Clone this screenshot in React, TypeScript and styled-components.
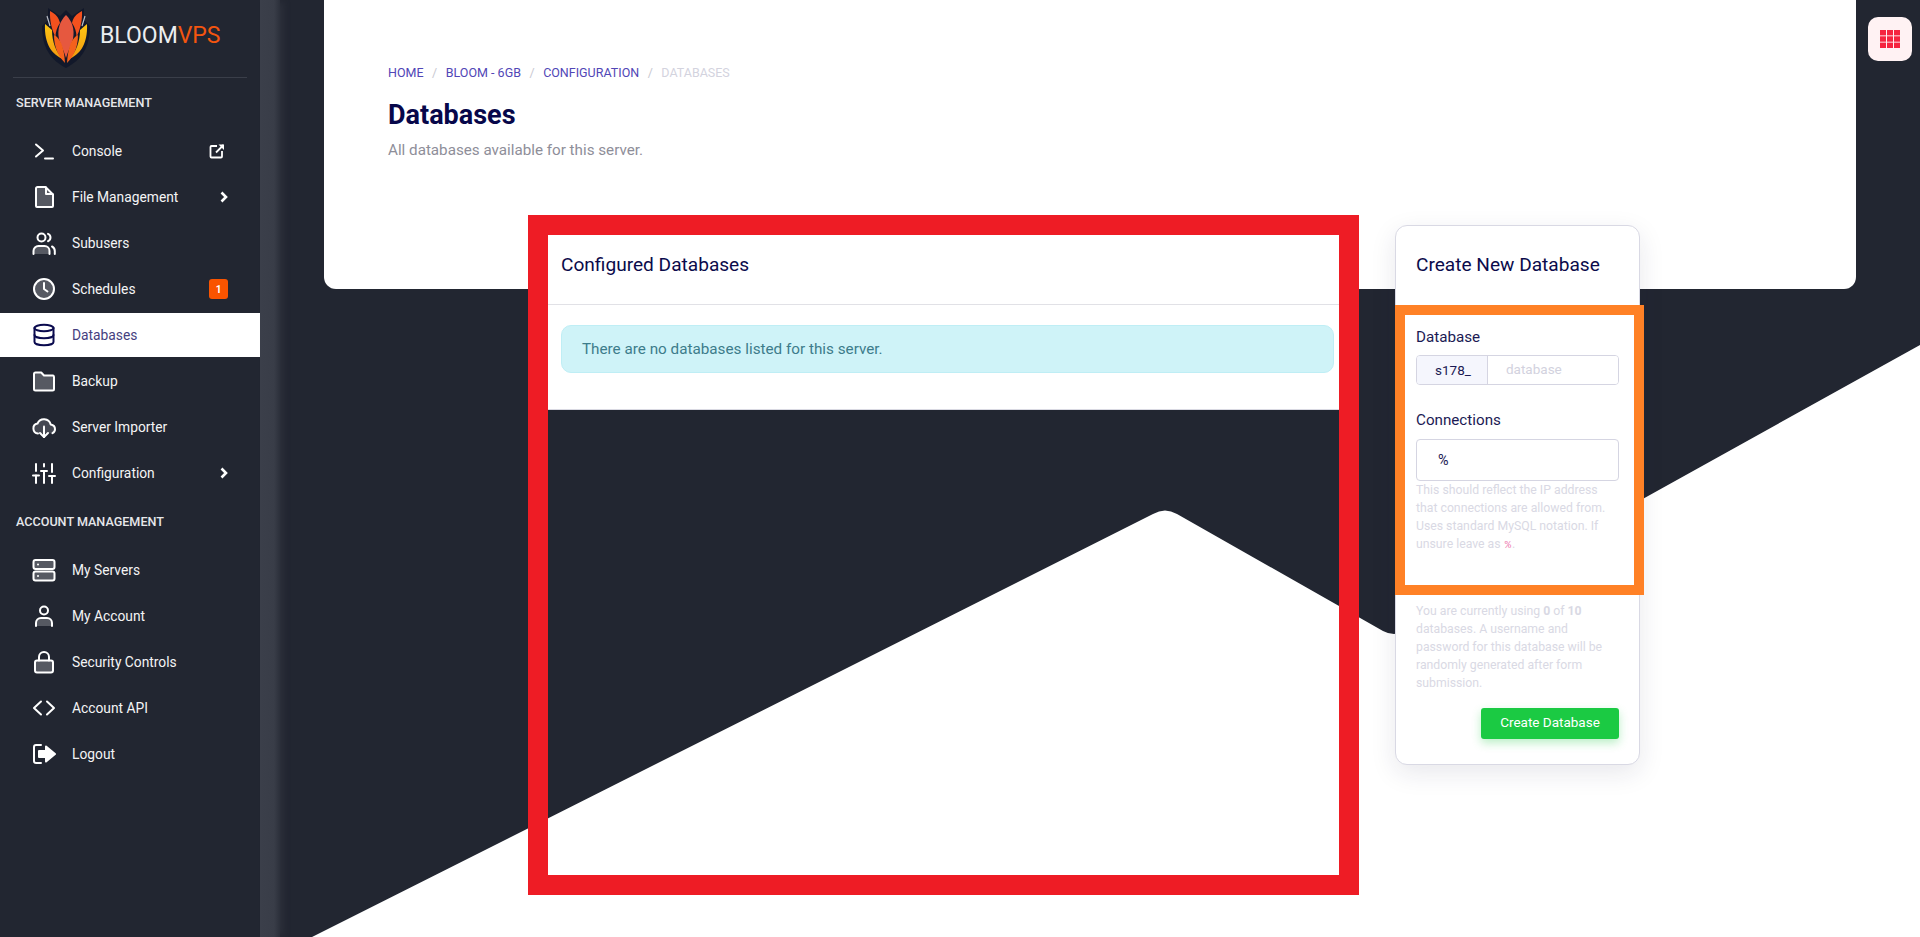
import React from "react";
import styled, { createGlobalStyle } from "styled-components";

const Global = createGlobalStyle`
  html, body { margin: 0; padding: 0; height: 937px; overflow: hidden; background: #222631; }
  * { box-sizing: border-box; }
  body { font-family: Roboto, "Liberation Sans", sans-serif; }
`;

const Page = styled.div`
  display: flex;
  width: 1920px;
  height: 937px;
  overflow: hidden;
  background: #222631;
`;

const Sidebar = styled.aside`
  width: 260px;
  flex: none;
  display: flex;
  flex-direction: column;
  background: #222631;
`;

const Brand = styled.div`
  height: 78px;
  margin: 0 13px;
  padding: 8px 0 0 29px;
  display: flex;
  align-items: flex-start;
  border-bottom: 1px solid #3a3e49;
`;

const BrandText = styled.div`
  margin: 12px 0 0 10px;
  font-family: Roboto, sans-serif;
  font-size: 23px;
  line-height: 32px;
  font-weight: 400;
  color: #eceef0;
  span { color: #f4550f; }
`;

const SectionTitle = styled.div<{ $first?: boolean }>`
  height: 16px;
  margin: ${(p) => (p.$first ? "17px" : "19px")} 0 18px 16px;
  font-size: 12.6px;
  line-height: 16px;
  font-weight: 500;
  color: #e6e7ea;
`;

const NavList = styled.nav`
  display: flex;
  flex-direction: column;
  gap: 2px;
`;

const NavRow = styled.div<{ $active?: boolean }>`
  height: 44px;
  padding: 0 32px;
  display: flex;
  align-items: center;
  gap: 16px;
  background: ${(p) => (p.$active ? "#fff" : "transparent")};
  color: ${(p) => (p.$active ? "#0a0a4e" : "#fff")};
`;

const NavLabel = styled.span<{ $active?: boolean }>`
  flex: 1;
  font-size: 13.8px;
  font-weight: 400;
  color: ${(p) => (p.$active ? "#453f80" : "#f4f4f5")};
`;

const Badge = styled.span`
  width: 19px;
  height: 20px;
  border-radius: 3px;
  background: #f95400;
  color: #fff;
  font-size: 10px;
  font-weight: 700;
  display: flex;
  align-items: center;
  justify-content: center;
`;

const IconSvg = styled.svg`
  width: 24px;
  height: 24px;
  flex: none;
  fill: none;
  stroke: currentColor;
  stroke-width: 2;
  stroke-linecap: round;
  stroke-linejoin: round;
`;

const ToneFill = styled.path`
  fill: currentColor;
  fill-opacity: 0.24;
  stroke: none;
`;

const ExternalIcon = styled.svg`
  width: 16px;
  height: 16px;
  margin-right: 3px;
  fill: none;
  stroke: #fff;
  stroke-width: 1.8;
`;

const ChevronIcon = styled.svg`
  width: 8px;
  height: 12px;
  fill: none;
  stroke: #fff;
  stroke-width: 2.6;
`;

const Strip = styled.div`
  width: 20px;
  flex: none;
  background: linear-gradient(to right, #3b3f4a 0%, #393d48 70%, #2c303b 100%);
  box-shadow: 5px 0 7px -2px rgba(59, 63, 74, 0.45);
`;

const Main = styled.main`
  position: relative;
  flex: 1;
  min-width: 0;
  height: 937px;
`;

const Backdrop = styled.svg`
  position: absolute;
  left: 0;
  top: 0;
  width: 1640px;
  height: 937px;
`;

const Hero = styled.header`
  position: relative;
  height: 289px;
  margin: 0 64px 0 44px;
  padding: 65px 64px 0;
  background: #fff;
  border-radius: 0 0 12px 12px;
`;

const Crumbs = styled.ol`
  display: flex;
  margin: 0;
  padding: 0;
  list-style: none;
  font-size: 12.5px;
  line-height: 16px;
  text-transform: uppercase;
`;

const Crumb = styled.li<{ $current?: boolean }>`
  color: ${(p) => (p.$current ? "#d3d3de" : "#5146b6")};
  &:not(:first-child)::before {
    content: "/";
    color: #c9c9d2;
    padding: 0 8.5px;
  }
`;

const Title = styled.h1`
  margin: 16px 0 0;
  font-size: 27px;
  line-height: 36px;
  font-weight: 700;
  color: #07074a;
`;

const Subtitle = styled.p`
  margin: 7px 0 0;
  font-size: 15.2px;
  line-height: 20px;
  color: #8e8e99;
`;

const GridButton = styled.button`
  position: absolute;
  left: 1588px;
  top: 17px;
  width: 44px;
  height: 44px;
  padding: 0;
  border: 0;
  border-radius: 10px;
  background: #fff2f3;
  display: flex;
  align-items: center;
  justify-content: center;
`;

const Content = styled.div`
  position: relative;
  display: flex;
  align-items: flex-start;
  gap: 36px;
  margin: -74px 0 0 248px;
`;

const RedFrame = styled.section`
  width: 831px;
  height: 680px;
  border: 20px solid #ee1c25;
  flex: none;
`;

const ListCard = styled.div`
  height: 175px;
  background: #fff;
  border-bottom: 1px solid #d9d9e2;
`;

const CardHeading = styled.h2`
  margin: 0;
  font-size: 19.1px;
  line-height: 24px;
  font-weight: 400;
  color: #0b0b4b;
`;

const ListHeader = styled.div`
  height: 70px;
  padding: 18px 13px 0;
  border-bottom: 1px solid #e1e1e6;
`;

const Alert = styled.div`
  height: 48px;
  margin: 20px 5px 0 13px;
  padding: 0 20px;
  display: flex;
  align-items: center;
  background: #cff3f8;
  border: 1px solid #bfeef5;
  border-radius: 10px;
  color: #3d7c8b;
  font-size: 15.25px;
`;

const CreateCard = styled.section`
  width: 245px;
  flex: none;
  margin-top: 10px;
  height: 540px;
  background: #fff;
  border: 1px solid #d9d9e4;
  border-radius: 12px;
  box-shadow: 0 8px 26px rgba(30, 30, 70, 0.1);
`;

const CreateHeader = styled.div`
  height: 79px;
  padding: 27px 20px 0;
`;

const OrangeFrame = styled.div`
  width: 249px;
  height: 290px;
  margin-left: -1px;
  border: 10px solid #ff8126;
  padding: 12px 15px 0 11px;
  background: #fff;
  position: relative;
`;

const FieldLabel = styled.label<{ $spaced?: boolean }>`
  display: block;
  margin-top: ${(p) => (p.$spaced ? "25px" : "0")};
  font-size: 15.2px;
  line-height: 20px;
  color: #1b1a54;
`;

const InputGroup = styled.div`
  display: flex;
  height: 30px;
  margin-top: 8px;
  border: 1px solid #d5d5e2;
  border-radius: 4px;
  overflow: hidden;
`;

const Addon = styled.span`
  width: 71px;
  padding-left: 18px;
  display: flex;
  align-items: center;
  background: #f5f6fd;
  border-right: 1px solid #d5d5e2;
  font-size: 13.5px;
  color: #1b1a54;
`;

const PlainInput = styled.input`
  flex: 1;
  min-width: 0;
  border: 0;
  outline: 0;
  padding: 0 0 2px 18px;
  font: 400 13.5px Roboto, sans-serif;
  &::placeholder { color: #d2d2de; opacity: 1; }
`;

const BoxInput = styled.input`
  display: block;
  width: 100%;
  height: 42px;
  margin-top: 9px;
  padding: 0 21px;
  border: 1px solid #d5d5e2;
  border-radius: 4px;
  outline: 0;
  font: 400 14.4px Roboto, sans-serif;
  color: #1b1a54;
`;

const Help = styled.p`
  margin: 0;
  font-size: 12.25px;
  line-height: 18px;
  color: #d9d9e4;
  code {
    font-family: "Liberation Mono", monospace;
    font-size: 10.5px;
    line-height: 1;
    margin: 0 1px;
    color: #ee7fb4;
  }
  strong { font-weight: 700; }
`;

const CreateBody = styled.div`
  padding: 7px 20px 0;
`;

const ButtonRow = styled.div`
  display: flex;
  justify-content: flex-end;
  margin-top: 16px;
`;

const SubmitButton = styled.button`
  width: 138px;
  height: 31px;
  padding: 0 0 3px;
  border: 0;
  border-radius: 3px;
  background: #1bca43;
  color: #fff;
  font: 400 13.5px Roboto, sans-serif;
  box-shadow: 0 4px 10px rgba(27, 202, 67, 0.3);
`;

const I = ({ children }: { children: React.ReactNode }) => <IconSvg viewBox="0 0 24 24">{children}</IconSvg>;

const icons: Record<string, React.ReactNode> = {
  console: (<><path d="M4 5.500 11 11.500 4 17.500" /><path d="M13 19.500h8" /></>),
  file: (<><ToneFill d="M4 2h10l7 7v13H4z" /><path d="M5.500 2h8L21 9.500V21a1 1 0 0 1-1 1H5a1 1 0 0 1-1-1V3.500A1.500 1.500 0 0 1 5.500 2z" /><path d="M14 2.500V9h6.500" /></>),
  users: (<><circle cx="9.500" cy="6.500" r="4" /><path d="M16 2.800a4 4 0 0 1 0 7.400" /><path d="M1.500 23v-3a5 5 0 0 1 5-5h6a5 5 0 0 1 5 5v3" /><ToneFill d="M2 23v-3a5 5 0 0 1 5-5h5a5 5 0 0 1 5 5v3z" /><path d="M20 15.500c1.700.8 2.800 2.500 2.800 4.500v3" /></>),
  clock: (<><circle cx="12" cy="12" r="10" fill="currentColor" fillOpacity=".24" /><path d="M12 6v6l3.500 2.500" /></>),
  db: (<><ellipse cx="12" cy="5" rx="9.500" ry="3.200" /><path d="M2.500 5v14c0 1.800 4.300 3.200 9.500 3.200s9.500-1.400 9.500-3.200V5" /><path d="M2.500 12c0 1.800 4.300 3.200 9.500 3.200s9.500-1.400 9.500-3.200" /></>),
  folder: (<><path d="M2 5a1.500 1.500 0 0 1 1.500-1.500h5.700l2.800 3h9A1.500 1.500 0 0 1 22 8v12a1.500 1.500 0 0 1-1.500 1.500h-17A1.500 1.500 0 0 1 2 20z" fill="currentColor" fillOpacity=".24" /></>),
  cloud: (<><path d="M6 18.500A5 5 0 0 1 5.500 8.600 7 7 0 0 1 18.700 9.500c2.500.4 4.300 2.300 4.300 4.700 0 1.800-1 3.200-2.500 4" fill="currentColor" fillOpacity=".16" /><path d="M12 11.500v10.500" /><path d="M8 18l4 4 4-4" /></>),
  sliders: (<><path d="M4 3v7M4 14.500V22M12 3v2.500M12 10v12M20 3v8M20 15v7" /><path d="M1 14.500h6M9 10h6M17 15h6" /></>),
  servers: (<><rect x="1.500" y="2" width="21" height="9" rx="2" fill="currentColor" fillOpacity=".24" /><rect x="1.500" y="13.500" width="21" height="9" rx="2" fill="currentColor" fillOpacity=".24" /><path d="M6 6.500h.01M6 18h.01" /></>),
  user: (<><circle cx="12" cy="6.500" r="4" /><ToneFill d="M4 22v-3a5 5 0 0 1 5-5h6a5 5 0 0 1 5 5v3z" /><path d="M4 22v-3a5 5 0 0 1 5-5h6a5 5 0 0 1 5 5v3" /></>),
  lock: (<><rect x="3" y="10.500" width="18" height="12" rx="2" fill="currentColor" fillOpacity=".24" /><path d="M7 10.500V7a5 5 0 0 1 10 0v3.500" /></>),
  code: (<><path d="M9 5.500 2 12l7 6.500" /><path d="M15 5.500l7 6.500-7 6.500" /></>),
  logout: (<><path d="M9 3H4a2 2 0 0 0-2 2v14a2 2 0 0 0 2 2h5" /><path d="M7 9h7V4.500L23 12l-9 7.500V15H7z" fill="currentColor" stroke="currentColor" /></>),
};

const External = () => (
  <ExternalIcon viewBox="0 0 16 16">
    <path d="M8 3H2.500a1 1 0 0 0-1 1v9.500a1 1 0 0 0 1 1H12a1 1 0 0 0 1-1V8" />
    <path d="M7 9.500 14.500 2" />
    <path d="M9.500 1.500h5.500v5.500" fill="#fff" stroke="none" />
  </ExternalIcon>
);

const Chevron = () => (
  <ChevronIcon viewBox="0 0 8 12">
    <path d="M1.500 1.500 6 6l-4.500 4.500" />
  </ChevronIcon>
);

const Logo = () => (
  <svg width="48" height="60" viewBox="0 0 48 60" aria-hidden="true">
    <defs>
      <linearGradient id="petal" x1="0" y1="0" x2="0" y2="1">
        <stop offset="0" stopColor="#fcc514" />
        <stop offset="1" stopColor="#f29a0e" />
      </linearGradient>
    </defs>
    <path d="M24 60C9 52 0 40 0 18L6 12 6 0 18 8 24 2 30 8 42 0 42 12 48 18C48 40 39 52 24 60Z" fill="#12182a" />
    <path d="M3 16 10 22C10 34 14 44 21 51 11 47 2 37 3 16Z" fill="url(#petal)" />
    <path d="M45 16 38 22C38 34 34 44 27 51 37 47 46 37 45 16Z" fill="url(#petal)" />
    <path d="M8 3C14 6 17 10 18 15 15 19 13.500 24 13.500 29 10 22 7.500 13 8 3Z" fill="#f4511e" />
    <path d="M40 3C34 6 31 10 30 15 33 19 34.500 24 34.500 29 38 22 40.500 13 40 3Z" fill="#f4511e" />
    <path d="M24 7C30 13 33 21 31 31 29 38 26 43 24 50 22 43 19 38 17 31 15 21 18 13 24 7Z" fill="#e6583f" />
    <path d="M12 27C18 30 22 38 23 55 17 49 12 40 12 27Z" fill="#f4611c" />
    <path d="M36 27C30 30 26 38 25 55 31 49 36 40 36 27Z" fill="#f4611c" />
    <path d="M5 8 8 18M43 8 40 18" stroke="#b8bcc6" strokeWidth="1.200" />
  </svg>
);

type Item = { icon: string; label: string; active?: boolean; trail?: "ext" | "chev" | "badge" };

const serverItems: Item[] = [
  { icon: "console", label: "Console", trail: "ext" },
  { icon: "file", label: "File Management", trail: "chev" },
  { icon: "users", label: "Subusers" },
  { icon: "clock", label: "Schedules", trail: "badge" },
  { icon: "db", label: "Databases", active: true },
  { icon: "folder", label: "Backup" },
  { icon: "cloud", label: "Server Importer" },
  { icon: "sliders", label: "Configuration", trail: "chev" },
];

const accountItems: Item[] = [
  { icon: "servers", label: "My Servers" },
  { icon: "user", label: "My Account" },
  { icon: "lock", label: "Security Controls" },
  { icon: "code", label: "Account API" },
  { icon: "logout", label: "Logout" },
];

const Rows = ({ items }: { items: Item[] }) => (
  <NavList>
    {items.map((it) => (
      <NavRow key={it.label} $active={it.active}>
        <I>{icons[it.icon]}</I>
        <NavLabel $active={it.active}>{it.label}</NavLabel>
        {it.trail === "ext" && <External />}
        {it.trail === "chev" && <Chevron />}
        {it.trail === "badge" && <Badge>1</Badge>}
      </NavRow>
    ))}
  </NavList>
);

export default function App() {
  return (
    <Page>
      <Global />
      <Sidebar>
        <Brand>
          <Logo />
          <BrandText>BLOOM<span>VPS</span></BrandText>
        </Brand>
        <SectionTitle $first>SERVER MANAGEMENT</SectionTitle>
        <Rows items={serverItems} />
        <SectionTitle>ACCOUNT MANAGEMENT</SectionTitle>
        <Rows items={accountItems} />
      </Sidebar>
      <Strip />
      <Main>
        <Backdrop viewBox="280 0 1640 937" aria-hidden="true">
          <path d="M312 937 L1153 514 Q1165 507 1177 514 L1383 631 Q1394 637 1405 631 L1920 345 L1920 937 Z" fill="#fff" />
        </Backdrop>
        <Hero>
          <Crumbs>
            <Crumb>Home</Crumb>
            <Crumb>Bloom - 6GB</Crumb>
            <Crumb>Configuration</Crumb>
            <Crumb $current>Databases</Crumb>
          </Crumbs>
          <Title>Databases</Title>
          <Subtitle>All databases available for this server.</Subtitle>
        </Hero>
        <GridButton aria-label="Apps">
          <svg width="20" height="18" viewBox="0 0 20 18" aria-hidden="true">
            {[0, 1, 2].flatMap((r) =>
              [0, 1, 2].map((c) => <rect key={`${r}${c}`} x={c * 7} y={r * 6.3} width="6" height="5.4" fill="#f5253f" />)
            )}
          </svg>
        </GridButton>
        <Content>
          <RedFrame>
            <ListCard>
              <ListHeader>
                <CardHeading>Configured Databases</CardHeading>
              </ListHeader>
              <Alert>There are no databases listed for this server.</Alert>
            </ListCard>
          </RedFrame>
          <CreateCard>
            <CreateHeader>
              <CardHeading>Create New Database</CardHeading>
            </CreateHeader>
            <OrangeFrame>
              <FieldLabel>Database</FieldLabel>
              <InputGroup>
                <Addon>s178_</Addon>
                <PlainInput placeholder="database" readOnly />
              </InputGroup>
              <FieldLabel $spaced>Connections</FieldLabel>
              <BoxInput defaultValue="%" readOnly />
              <Help>
                This should reflect the IP address that connections are allowed from. Uses standard MySQL notation. If unsure leave as <code>%</code>.
              </Help>
            </OrangeFrame>
            <CreateBody>
              <Help>
                You are currently using <strong>0</strong> of <strong>10</strong> databases. A username and password for this database will be randomly generated after form submission.
              </Help>
              <ButtonRow>
                <SubmitButton>Create Database</SubmitButton>
              </ButtonRow>
            </CreateBody>
          </CreateCard>
        </Content>
      </Main>
    </Page>
  );
}
